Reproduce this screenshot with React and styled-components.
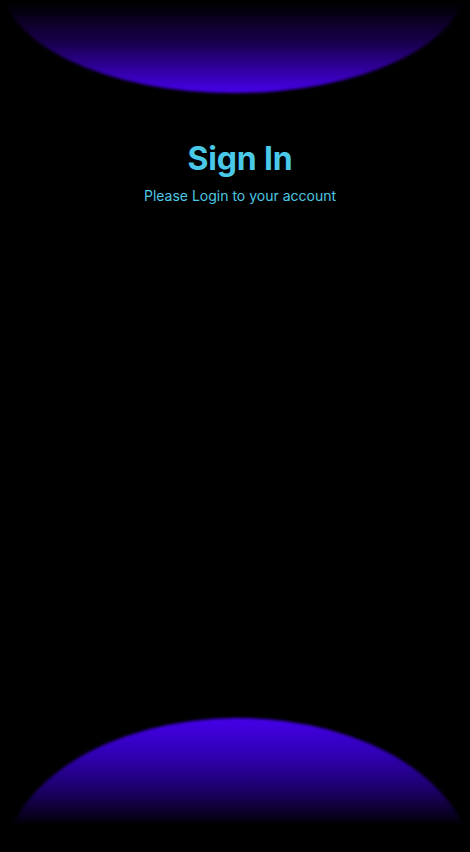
import React from 'react';
import styled, { createGlobalStyle } from 'styled-components';

const GlobalStyle = createGlobalStyle`
  html, body {
    margin: 0;
    padding: 0;
    background: #000;
  }
  body {
    font-family: Inter, "Noto Sans", sans-serif;
  }
`;

const Screen = styled.div`
  position: relative;
  width: 100%;
  height: 852px;
  overflow: hidden;
  background: #000;
  display: flex;
  flex-direction: column;
  align-items: center;
`;

// glowing half-spheres at the top and bottom edge
const Glow = styled.div`
  position: absolute;
  left: ${props => props.left}px;
  width: ${props => props.w}px;
  height: ${props => props.h}px;
  border-radius: 50%;
  filter: blur(1.5px);
  ${props => props.bottom
    ? `top: 718px; background: linear-gradient(to bottom, #4500ea 0%, #3000b4 12%, #1c0068 24%, rgba(0, 0, 0, 0) 36%);`
    : `top: -127px; background: linear-gradient(to bottom, rgba(0, 0, 0, 0) 59%, #1a0052 78%, #4600ea 100%);`}
`;

const Header = styled.div`
  position: relative;
  display: flex;
  flex-direction: column;
  align-items: center;
  padding-top: 139px;
  padding-left: 10px;
`;

const Title = styled.h1`
  margin: 0;
  font-size: 32px;
  font-weight: 700;
  color: #4ac8e8;
  letter-spacing: -0.2px;
`;

const Subtitle = styled.p`
  margin: 9px 0 0;
  font-size: 14px;
  color: #4cc8e2;
`;

export default function App () {
  return (
    <>
      <GlobalStyle />
      <Screen>
        <Glow left={2} w={464} h={220} />
        <Glow bottom left={3} w={470} h={300} />
        <Header>
          <Title>Sign In</Title>
          <Subtitle>Please Login to your account</Subtitle>
        </Header>
      </Screen>
    </>
  );
}
